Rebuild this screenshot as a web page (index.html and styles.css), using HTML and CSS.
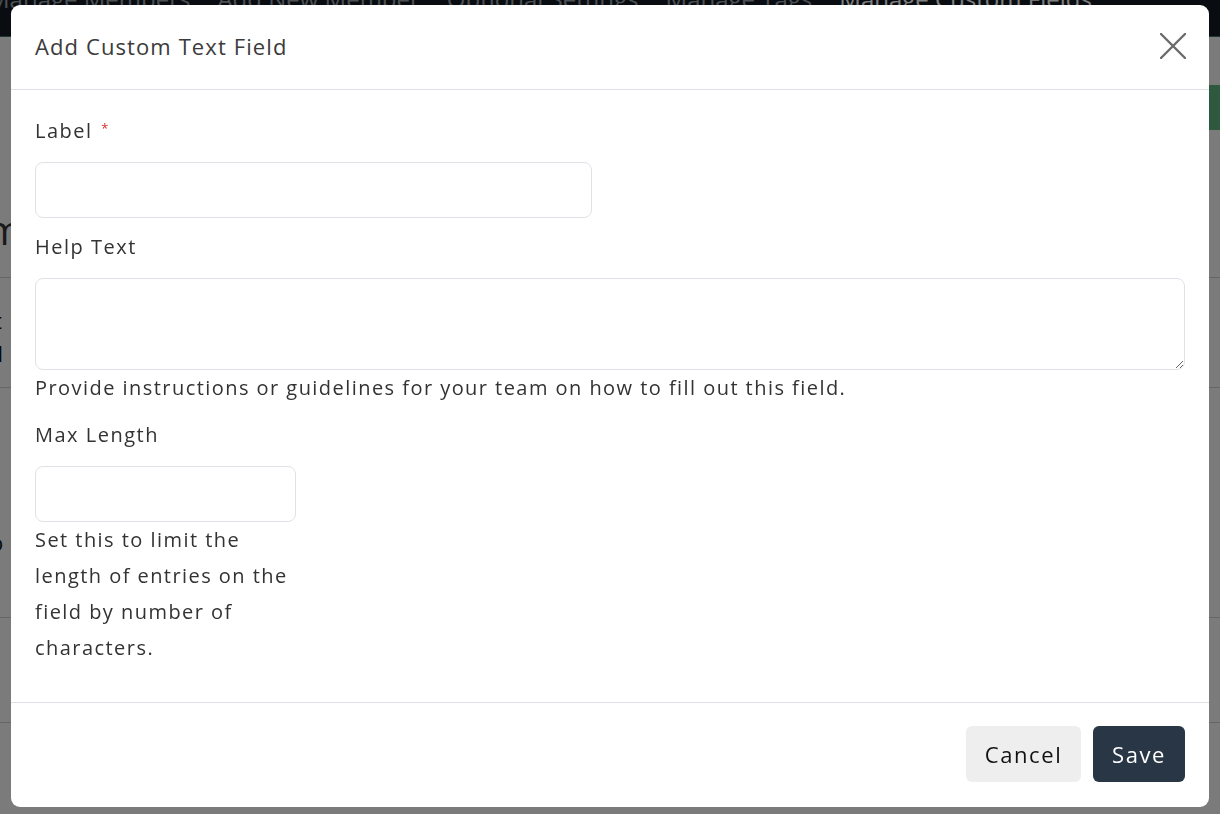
FILE: index.html
```html
<!DOCTYPE html>
<html lang="en">
<head>
<meta charset="utf-8">
<title>Add Custom Text Field</title>
<link rel="stylesheet" href="styles.css">
</head>
<body>
<div class="page">
  <nav class="topnav">
    <a class="nav-item">Manage Members</a>
    <a class="nav-item">Add New Member</a>
    <a class="nav-item">Optional Settings</a>
    <a class="nav-item">Manage Tags</a>
    <a class="nav-item active">Manage Custom Fields</a>
  </nav>
  <div class="content">
    <div class="content-top"><span class="green-btn">o</span></div>
    <h1 class="page-title">m</h1>
    <div class="row row-a">t</div>
    <div class="row row-b">il</div>
    <div class="row row-c"></div>
    <div class="row row-d">o</div>
    <div class="row row-e"></div>
    <div class="row row-f"></div>
  </div>
</div>
<div class="backdrop"></div>
<div class="modal-wrap">
  <div class="modal">
    <div class="modal-header">
      <h2 class="modal-title">Add Custom Text Field</h2>
      <button class="close-btn" aria-label="Close">
        <svg width="26" height="26" viewBox="0 0 26 26"><path d="M1 1 L25 25 M25 1 L1 25" stroke="#6b6b6b" stroke-width="2.4" stroke-linecap="round" fill="none"/></svg>
      </button>
    </div>
    <div class="modal-body">
      <div class="field field-label">
        <label class="form-label">Label <span class="req">*</span></label>
        <input class="form-control" type="text">
      </div>
      <div class="field field-help">
        <label class="form-label">Help Text</label>
        <textarea class="form-control textarea"></textarea>
        <div class="form-text">Provide instructions or guidelines for your team on how to fill out this field.</div>
      </div>
      <div class="field field-max">
        <label class="form-label">Max Length</label>
        <input class="form-control" type="text">
        <div class="form-text">Set this to limit the length of entries on the field by number of characters.</div>
      </div>
    </div>
    <div class="modal-footer">
      <button class="btn btn-cancel">Cancel</button>
      <button class="btn btn-save">Save</button>
    </div>
  </div>
</div>
</body>
</html>
```
FILE: styles.css
```css
* { box-sizing: border-box; }
html, body { margin: 0; padding: 0; }
body {
  width: 1220px;
  height: 814px;
  overflow: hidden;
  background: #f6f6f6;
  font-family: "Open Sans", "Lato", sans-serif;
  color: #333;
}
.page { width: 1220px; height: 814px; }
.topnav {
  height: 37px;
  background: #131b24;
  border-bottom: 1px solid #3a6a6a;
  display: flex;
  gap: 27px;
  overflow: hidden;
  font-size: 24px;
}
.nav-item {
  color: #9aa0a6;
  line-height: 24px;
  margin-top: -13px;
  white-space: nowrap;
}
.nav-item:first-child { margin-left: -12px; }
.nav-item.active { color: #fff; }
.content-top { height: 93px; display: flex; justify-content: flex-end; align-items: flex-start; padding-top: 48px; }
.green-btn { background: #5db37e; color: #fff; width: 40px; height: 45px; display: block; font-size: 22px; line-height: 45px; padding-left: 4px; }
.page-title { margin: 0; font-weight: 400; font-size: 40px; line-height: 60px; height: 147px; padding-top: 70px; margin-left: -14px; }
.row { border-top: 1px solid #ccc; font-size: 22px; color: #111; }
.row-a { height: 62px; line-height: 28px; padding-top: 28px; margin-left: -6px; }
.row-b { border-top: none; height: 48px; line-height: 28px; margin-left: -8px; }
.row-c { height: 173px; }
.row-d { border-top: none; margin-top: -173px; padding-top: 140px; height: 230px; margin-left: -10px; }
.row-e { height: 105px; }
.row-f { height: 100px; }
.backdrop {
  position: fixed;
  inset: 0;
  background: rgba(0, 0, 0, 0.5);
}
.modal-wrap {
  position: fixed;
  inset: 0;
  padding: 5px 11px 7px 11px;
}
.modal {
  background: #fff;
  border-radius: 9px;
  height: 802px;
  display: flex;
  flex-direction: column;
}
.modal-header {
  height: 85px;
  border-bottom: 1px solid #dee2e6;
  display: flex;
  align-items: center;
  justify-content: space-between;
  padding: 0 24px 2px 24px;
}
.modal-title {
  margin: 0;
  font-size: 22px;
  font-weight: 500;
  letter-spacing: 1.1px;
  color: #3b3b3b;
}
.close-btn {
  background: none;
  border: none;
  padding: 0;
  width: 26px;
  height: 26px;
  display: flex;
  margin-right: -1px;
}
.modal-body {
  flex: 1;
  padding: 23px 24px 0 24px;
}
.field { display: flex; flex-direction: column; margin-bottom: 11px; }
.field-label { width: 557px; }
.field-max { width: 261px; }
.form-label {
  font-size: 20px;
  line-height: 36px;
  letter-spacing: 1.5px;
  margin-bottom: 13px;
  color: #333;
}
.req { color: #d32f2f; font-size: 13px; vertical-align: top; position: relative; top: -3px; letter-spacing: 0; margin-left: 2px; }
.form-control {
  display: block;
  width: 100%;
  height: 56px;
  border: 1px solid #dee2e6;
  border-radius: 8px;
  background: #fff;
  font: inherit;
  padding: 0 16px;
  margin: 0;
}
.textarea { height: 92px; resize: vertical; }
.form-text {
  font-size: 20px;
  line-height: 36px;
  letter-spacing: 1.45px;
  color: #333;
}
.modal-footer {
  height: 105px;
  border-top: 1px solid #dee2e6;
  display: flex;
  justify-content: flex-end;
  align-items: flex-start;
  gap: 12px;
  padding: 23px 24px 0 24px;
}
.btn {
  height: 56px;
  border: none;
  border-radius: 6px;
  font-family: inherit;
  font-size: 22px;
  letter-spacing: 1.6px;
  padding: 0;
}
.btn-cancel { background: #eeeeee; color: #111; width: 115px; }
.btn-save { background: #283645; color: #fff; width: 92px; }
```
